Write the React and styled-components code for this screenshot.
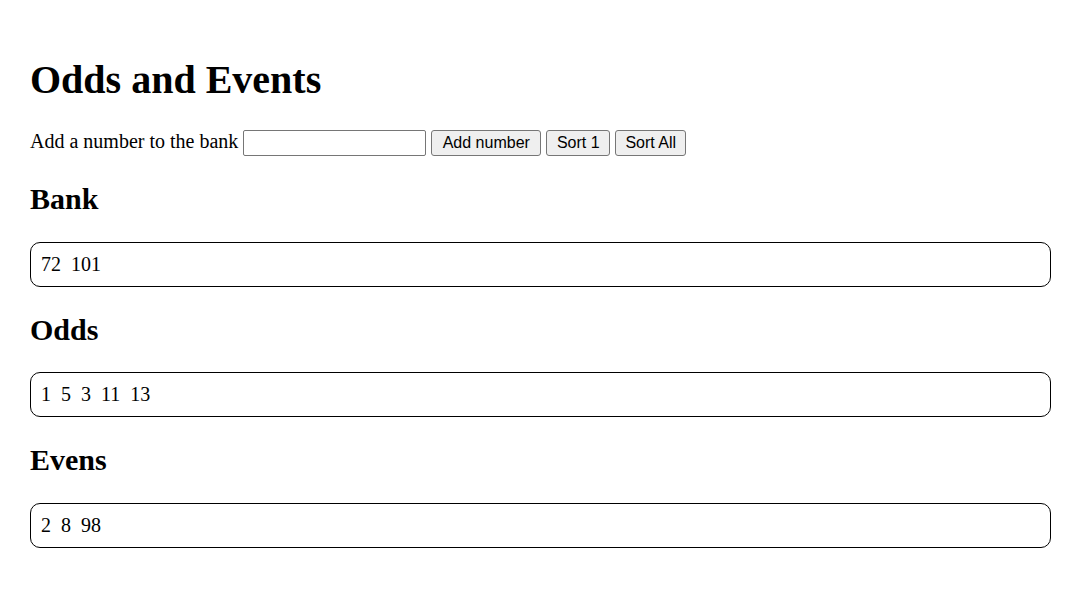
import React, {useState} from 'react';
import styled, {createGlobalStyle} from 'styled-components';

const Global_style = createGlobalStyle`
    html, body {
        margin: 0;
        background: #fff;
        color: #000;
    }
    body {
        font-family: "Liberation Serif", "Times New Roman", serif;
        font-size: 20px;
        line-height: 23px;
    }
`;

const Page = styled.div`
    padding: 57px 30px 30px;
`;

const Title = styled.h1`
    margin: 0;
    font-size: 40px;
    line-height: 46px;
    font-weight: bold;
`;

const Add_row = styled.div`
    display: flex;
    align-items: baseline;
    gap: 5px;
    margin-top: 27px;
`;

const Number_input = styled.input`
    box-sizing: border-box;
    width: 183px;
    height: 26px;
    margin: 0;
    padding: 1px 3px;
    border: 1px solid #767676;
    border-radius: 2px;
    background: #fff;
    font-family: "Liberation Sans", Arial, sans-serif;
    font-size: 16px;
`;

const Btn = styled.button`
    box-sizing: border-box;
    width: ${p=>p.$w}px;
    height: 26px;
    margin: 0;
    padding: 0;
    border: 1px solid #767676;
    border-radius: 3px;
    background: #efefef;
    color: #000;
    font-family: "Liberation Sans", Arial, sans-serif;
    font-size: 16px;
    cursor: pointer;
`;

const Section_title = styled.h2`
    margin: 26px 0 25px;
    font-size: 30px;
    line-height: 34.5px;
    font-weight: bold;
`;

const Num_box = styled.div`
    display: flex;
    gap: 10px;
    padding: 10px;
    border: 1px solid #000;
    border-radius: 10px;
    min-height: 23px;
`;

const Num = styled.span`
    line-height: 23px;
`;

const Section = ({title, nums})=><>
  <Section_title>{title}</Section_title>
  <Num_box>
    {nums.map((n, i)=><Num key={i}>{n}</Num>)}
  </Num_box>
</>;

const App = ()=>{
    const [val, set_val] = useState('');
    const [bank, set_bank] = useState([72, 101]);
    const [odds, set_odds] = useState([1, 5, 3, 11, 13]);
    const [evens, set_evens] = useState([2, 8, 98]);
    const add = ()=>{
        const n = parseInt(val, 10);
        if (isNaN(n))
            return;
        set_bank([...bank, n]);
        set_val('');
    };
    const sort_one = ()=>{
        if (!bank.length)
            return;
        const [n, ...rest] = bank;
        set_bank(rest);
        if (n%2)
            set_odds([...odds, n]);
        else
            set_evens([...evens, n]);
    };
    const sort_all = ()=>{
        set_odds([...odds, ...bank.filter(n=>n%2)]);
        set_evens([...evens, ...bank.filter(n=>!(n%2))]);
        set_bank([]);
    };
    return <Page>
      <Global_style/>
      <Title>Odds and Events</Title>
      <Add_row>
        <span>Add a number to the bank</span>
        <Number_input type="text" value={val}
          onChange={e=>set_val(e.target.value)}/>
        <Btn $w={110} onClick={add}>Add number</Btn>
        <Btn $w={64} onClick={sort_one}>Sort 1</Btn>
        <Btn $w={71} onClick={sort_all}>Sort All</Btn>
      </Add_row>
      <Section title="Bank" nums={bank}/>
      <Section title="Odds" nums={odds}/>
      <Section title="Evens" nums={evens}/>
    </Page>;
};

export default App;
